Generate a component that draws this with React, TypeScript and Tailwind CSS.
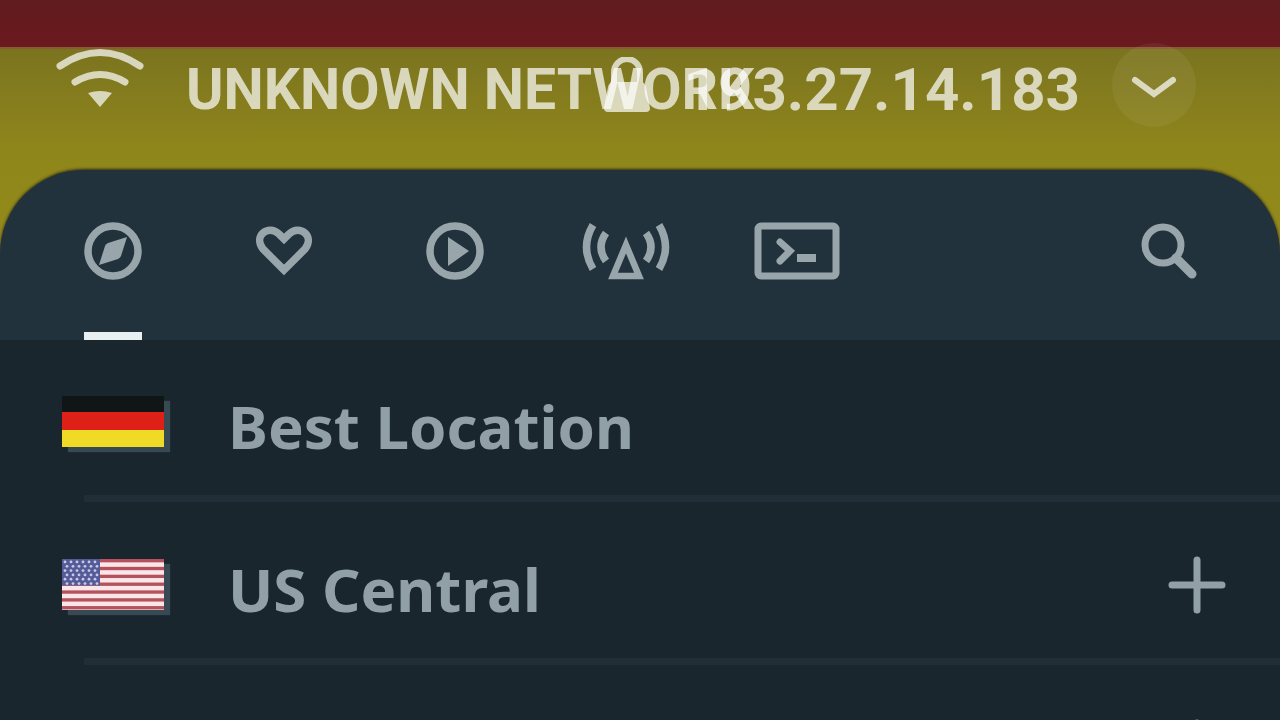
import type { ReactNode } from "react";

type Location = {
  id: string
  name: string
  flag: ReactNode
  expandable: boolean
}

type Tab = {
  id: string
  label: string
  icon: ReactNode
}

const GermanFlag = () => (
  <svg width="102" height="51" viewBox="0 0 102 51" aria-hidden="true">
    <rect width="102" height="51" fill="#101615" />
    <rect y="16" width="102" height="18" fill="#df2019" />
    <rect y="34" width="102" height="17" fill="#efda25" />
  </svg>
);

const UsFlag = () => (
  <svg width="102" height="51" viewBox="0 0 102 52" preserveAspectRatio="none" aria-hidden="true">
    <rect width="102" height="52" fill="#fae6e8" />
    {[0, 1, 2, 3, 4, 5, 6].map((i) => (
      <rect key={i} y={i * 8} width="102" height="3.4" fill="#b5505e" />
    ))}
    <rect width="38" height="27" fill="#555b98" />
    {[0, 1, 2, 3, 4, 5].map((row) =>
      [0, 1, 2, 3, 4, 5].map((col) => (
        <circle key={`${row}-${col}`} cx={3 + col * 6 + (row % 2) * 2} cy={3 + row * 4.4} r="1.4" fill="#c9cbe6" />
      ))
    )}
  </svg>
);

const WifiIcon = () => (
  <svg width="88" height="62" viewBox="0 0 88 62" fill="none" stroke="currentColor" strokeWidth="7" strokeLinecap="round" aria-hidden="true">
    <path d="M4 19 Q44 -8 84 19" />
    <path d="M19 35 Q44 20 69 35" />
    <path d="M32 46 Q44 42 56 46 L44 60 Z" fill="currentColor" stroke="none" />
  </svg>
);

const LockIcon = () => (
  <svg width="46" height="58" viewBox="0 0 46 58" aria-hidden="true">
    <path d="M10 27 V15 A13 13 0 0 1 36 15 V27" fill="none" stroke="currentColor" strokeWidth="6" />
    <path d="M8 25 H38 Q41 26 42 30 L46 51 Q46 55 42 55 H4 Q0 55 0 51 L4 30 Q5 26 8 25 Z" fill="currentColor" />
  </svg>
);

const ChevronIcon = () => (
  <svg width="46" height="24" viewBox="0 0 46 24" fill="none" stroke="currentColor" strokeWidth="6" strokeLinecap="round" aria-hidden="true">
    <path d="M4 5 L23 19 L42 5" />
  </svg>
);

const CompassIcon = () => (
  <svg width="58" height="58" viewBox="0 0 58 58" aria-hidden="true">
    <circle cx="29" cy="29" r="25" fill="none" stroke="currentColor" strokeWidth="7.5" />
    <path d="M43 15 L37 34 Q36 36 34 37 L15 43 L21 24 Q22 22 24 21 Z" fill="currentColor" />
  </svg>
);

const HeartIcon = () => (
  <svg width="58" height="58" viewBox="0 0 58 58" fill="none" stroke="currentColor" strokeWidth="7.5" aria-hidden="true">
    <path d="M29 48 L8 27 C-2 14 13 2 24 12 L29 17 L34 12 C45 2 60 14 50 27 Z" />
  </svg>
);

const PlayIcon = () => (
  <svg width="58" height="58" viewBox="0 0 58 58" aria-hidden="true">
    <circle cx="29" cy="29" r="25" fill="none" stroke="currentColor" strokeWidth="7.5" />
    <path d="M22 15 L43 29 L22 44 Z" fill="currentColor" />
  </svg>
);

const AntennaIcon = () => (
  <svg width="88" height="58" viewBox="0 0 88 58" fill="none" stroke="currentColor" strokeWidth="7.5" aria-hidden="true">
    <path d="M11 3 Q-2 25 11 47" />
    <path d="M24 11 Q14 25 24 39" />
    <path d="M77 3 Q90 25 77 47" />
    <path d="M64 11 Q74 25 64 39" />
    <path d="M44 23 L57 54 H31 Z" strokeWidth="6.5" />
  </svg>
);

const TerminalIcon = () => (
  <svg width="86" height="58" viewBox="0 0 86 58" fill="none" stroke="currentColor" strokeWidth="7" aria-hidden="true">
    <rect x="4" y="4" width="78" height="50" rx="3" />
    <path d="M26 20 L36 29 L26 39" strokeLinecap="round" />
    <path d="M43 36 H62" strokeWidth="8" />
  </svg>
);

const SearchIcon = () => (
  <svg width="56" height="56" viewBox="0 0 56 56" fill="none" stroke="currentColor" aria-hidden="true">
    <circle cx="22" cy="22" r="18" strokeWidth="7" />
    <path d="M35 35 L51 51" strokeWidth="9" strokeLinecap="round" />
  </svg>
);

const PlusIcon = () => (
  <svg width="58" height="58" viewBox="0 0 58 58" stroke="currentColor" strokeWidth="7" strokeLinecap="round" aria-hidden="true">
    <path d="M4 29 H54 M29 4 V54" />
  </svg>
);

const tabs: Tab[] = [
  { id: "all", label: "All locations", icon: <CompassIcon /> },
  { id: "favorites", label: "Favorites", icon: <HeartIcon /> },
  { id: "streaming", label: "Streaming", icon: <PlayIcon /> },
  { id: "static", label: "Static IPs", icon: <AntennaIcon /> },
  { id: "config", label: "Custom configs", icon: <TerminalIcon /> },
];

const locations: Location[] = [
  { id: "best", name: "Best Location", flag: <GermanFlag />, expandable: false },
  { id: "us-central", name: "US Central", flag: <UsFlag />, expandable: true },
  { id: "next", name: "", flag: null, expandable: true },
];

const StatusBar = () => (
  <header className="relative flex h-[123px] items-start pl-14 leading-[86px] font-bold text-white">
    <div className="flex min-w-0 items-start gap-[42px] whitespace-nowrap opacity-70">
      <span className="shrink-0"><WifiIcon /></span>
      <span className="text-[57px]">UNKNOWN NETWORK</span>
    </div>
    <div className="absolute left-[604px] top-2.5 opacity-70">
      <LockIcon />
    </div>
    <div className="absolute right-[84px] -top-1 flex items-start gap-8">
      <span className="pt-1 text-[60px] opacity-70">193.27.14.183</span>
      <button type="button" aria-label="Show network details" className="flex size-[84px] items-center justify-center rounded-full bg-white/6 pt-1">
        <span className="opacity-70"><ChevronIcon /></span>
      </button>
    </div>
  </header>
);

const TabBar = ({ active }: { active: string }) => (
  <nav className="flex h-[170px] rounded-t-[84px] bg-[#22323c] pl-[27px] pr-[83px] text-[#98a6ab] shadow-[0_-1px_3px_#2c2d18]">
    {tabs.map((tab) => (
      <button
        key={tab.id}
        type="button"
        aria-label={tab.label}
        className="relative flex w-[171px] items-center justify-center pb-2"
      >
        {tab.icon}
        {tab.id === active && <span className="absolute bottom-0 h-2 w-[58px] bg-[#e8f0f2]" />}
      </button>
    ))}
    <button type="button" aria-label="Search" className="ml-auto flex items-center pb-2">
      <SearchIcon />
    </button>
  </nav>
);

const LocationRow = ({ location }: { location: Location }) => (
  <li className="pb-px">
    <div className="flex h-[155px] items-center pl-[62px] pr-[54px] pt-2">
      <span className="h-[51px] w-[102px] bg-[#101615] shadow-[6px_5px_1px_#374a54]">{location.flag}</span>
      <span className="ml-16 pt-2 text-[60px] leading-none font-bold">{location.name}</span>
      {location.expandable && (
        <button type="button" aria-label={`Expand ${location.name}`} className="ml-auto">
          <PlusIcon />
        </button>
      )}
    </div>
    <hr className="ml-[84px] h-[7px] border-0 bg-[#212e38]" />
  </li>
);

export default function App() {
  return (
    <div className="h-screen overflow-hidden bg-[#1a262e] font-['Roboto','Liberation_Sans',sans-serif]">
      <div className="h-[47px] bg-linear-to-b from-[#601c1f] to-[#6b191e]" />
      <div className="border-t-2 border-[#8a5a32] bg-linear-to-b from-[#7b741f] via-[#8f861b] via-35% to-[#99901a]">
        <div className="-mt-0.5">
          <StatusBar />
          <TabBar active="all" />
        </div>
      </div>
      <ul className="font-['Noto_Sans','Liberation_Sans',sans-serif] text-[#91a0a7]">
        {locations.map((location) => (
          <LocationRow key={location.id} location={location} />
        ))}
      </ul>
    </div>
  )
};
